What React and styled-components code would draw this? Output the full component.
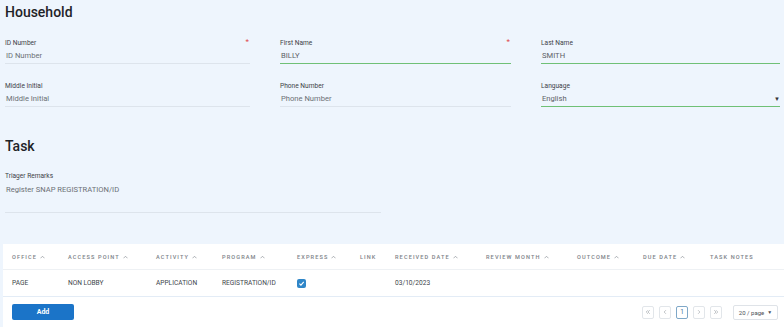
import React from "react";
import styled, { createGlobalStyle } from "styled-components";

const Global = createGlobalStyle`
  html, body { margin: 0; padding: 0; background: #ffffff; }
  body { font-family: Roboto, "Liberation Sans", Arial, sans-serif; }
  * { box-sizing: border-box; }
`;

const Page = styled.div`
  width: 784px;
  background: #eef5fd;
  padding: 0 0 0 3px;
`;

const Section = styled.section`
  padding: 0 4px 0 2px;
`;

const Title = styled.h2`
  margin: 0;
  font-size: 14px;
  line-height: 18px;
  font-weight: 500;
  color: #1f2328;
  padding-top: ${(p) => p.$top || 3}px;
`;

const FieldGrid = styled.div`
  display: grid;
  grid-template-columns: 245px 231px 1fr;
  column-gap: 30px;
  row-gap: 18px;
  margin-top: 18px;
`;

const Field = styled.div`
  position: relative;
  width: ${(p) => p.$width || "auto"};
`;

const Label = styled.div`
  font-size: 6.6px;
  line-height: 9px;
  height: 9px;
  color: #3d4247;
`;

const Value = styled.div`
  font-size: 7.6px;
  line-height: 14px;
  padding-left: 1px;
  height: ${(p) => p.$h || 15}px;
  color: ${(p) => (p.$filled ? "#5d6166" : "#6c7075")};
  display: flex;
  align-items: ${(p) => (p.$tall ? "flex-start" : "center")};
  justify-content: space-between;
  padding-top: ${(p) => (p.$tall ? "2px" : "0")};
`;

const Underline = styled.div`
  height: 1px;
  background: ${(p) => (p.$filled ? "#6fc076" : "#dde4ec")};
`;

const Required = styled.span`
  position: absolute;
  right: 1px;
  top: -2px;
  color: #e0454f;
  font-size: 8px;
`;

const Caret = styled.span`
  font-size: 6px;
  color: #333;
`;

const TaskFields = styled.div`
  margin-top: 17px;
`;

const Table = styled.div`
  margin-top: 31px;
  background: #ffffff;
`;

const cols = "65px 88px 66px 75px 63px 35px 91px 91px 66px 67px 1fr";

const HeadRow = styled.div`
  display: grid;
  grid-template-columns: ${cols};
  height: 26px;
  align-items: center;
  border-bottom: 1px solid #eef1f4;
  padding-top: 1px;
`;

const BodyRow = styled.div`
  display: grid;
  grid-template-columns: ${cols};
  height: 27px;
  align-items: center;
  border-bottom: 1px solid #e3ecf6;
`;

const Th = styled.div`
  font-size: 5.6px;
  letter-spacing: 1.1px;
  color: #7d8288;
  font-weight: 500;
  padding-left: ${(p) => (p.$first ? 9 : 0)}px;
  display: flex;
  align-items: center;
  gap: 3px;
  white-space: nowrap;
`;

const Td = styled.div`
  font-size: 6.6px;
  color: #41464c;
  padding-left: ${(p) => (p.$first ? 9 : 0)}px;
  white-space: nowrap;
  display: flex;
  align-items: center;
`;

const Check = styled.span`
  width: 9px;
  height: 9px;
  border-radius: 2px;
  background: #2f86c8;
  display: inline-flex;
  align-items: center;
  justify-content: center;
`;

const Footer = styled.div`
  display: flex;
  align-items: center;
  justify-content: space-between;
  height: 30px;
  padding: 0 6px 0 9px;
`;

const AddButton = styled.button`
  width: 62px;
  height: 16px;
  border: none;
  border-radius: 2px;
  background: #1b74c8;
  color: #fff;
  font-family: inherit;
  font-size: 7px;
  font-weight: 700;
  padding: 0;
`;

const Pager = styled.div`
  display: flex;
  align-items: center;
  gap: 5px;
`;

const PageBtn = styled.div`
  width: 12px;
  height: 13px;
  border: 1px solid ${(p) => (p.$active ? "#7fa8c8" : "#e2e6ea")};
  border-radius: 2px;
  font-size: 6.5px;
  color: ${(p) => (p.$active ? "#3d6f99" : "#9aa0a6")};
  display: flex;
  align-items: center;
  justify-content: center;
  background: #fff;
`;

const SizeSelect = styled.div`
  margin-left: 6px;
  width: 45px;
  height: 15px;
  border: 1px solid #dfe3e8;
  border-radius: 2px;
  font-size: 6px;
  color: #4b5056;
  display: flex;
  align-items: center;
  justify-content: center;
  gap: 3px;
  background: #fff;
`;

const SmallCaret = styled.span`
  font-size: 5px;
`;

const Up = () => (
  <svg width="5" height="4" viewBox="0 0 10 6" fill="none">
    <path d="M1 5.5 L5 1.5 L9 5.5" stroke="#8b9096" strokeWidth="1.4" />
  </svg>
);

const Chev = ({ d }) => (
  <svg width="6" height="6" viewBox="0 0 10 10" fill="none">
    <path d={d} stroke="#a3a8ad" strokeWidth="1.1" />
  </svg>
);

const headers = [
  ["OFFICE", true],
  ["ACCESS POINT", true],
  ["ACTIVITY", true],
  ["PROGRAM", true],
  ["EXPRESS", true],
  ["LINK", false],
  ["RECEIVED DATE", true],
  ["REVIEW MONTH", true],
  ["OUTCOME", true],
  ["DUE DATE", true],
  ["TASK NOTES", false],
];

const InputField = ({ label, value, filled, required, caret, tall, h, width }) => (
  <Field $width={width}>
    <Label>{label}</Label>
    <Value $filled={filled} $tall={tall} $h={h}>
      {value}
      {caret && <Caret>▼</Caret>}
    </Value>
    <Underline $filled={filled} />
    {required && <Required>*</Required>}
  </Field>
);

export default function App() {
  return (
    <>
      <Global />
      <Page>
        <Section>
          <Title $top={3}>Household</Title>
          <FieldGrid>
            <InputField label="ID Number" value="ID Number" required />
            <InputField label="First Name" value="BILLY" filled required />
            <InputField label="Last Name" value="SMITH" filled />
            <InputField label="Middle Initial" value="Middle Initial" />
            <InputField label="Phone Number" value="Phone Number" />
            <InputField label="Language" value="English" filled caret />
          </FieldGrid>
          <Title $top={30}>Task</Title>
          <TaskFields>
            <InputField
              width="376px"
              label="Triager Remarks"
              value="Register SNAP REGISTRATION/ID"
              tall
              h={31}
            />
          </TaskFields>
        </Section>
        <Table>
          <HeadRow>
            {headers.map(([h, s], i) => (
              <Th key={h} $first={i === 0}>
                {h}
                {s && <Up />}
              </Th>
            ))}
          </HeadRow>
          <BodyRow>
            <Td $first>PAGE</Td>
            <Td>NON LOBBY</Td>
            <Td>APPLICATION</Td>
            <Td>REGISTRATION/ID</Td>
            <Td>
              <Check>
                <svg width="7" height="7" viewBox="0 0 10 10" fill="none">
                  <path d="M2 5.2 L4.2 7.3 L8.2 2.8" stroke="#fff" strokeWidth="1.6" />
                </svg>
              </Check>
            </Td>
            <Td />
            <Td>03/10/2023</Td>
            <Td />
            <Td />
            <Td />
            <Td />
          </BodyRow>
          <Footer>
            <AddButton>Add</AddButton>
            <Pager>
              <PageBtn><Chev d="M5 2 L2 5 L5 8 M8 2 L5 5 L8 8" /></PageBtn>
              <PageBtn><Chev d="M6.5 2 L3.5 5 L6.5 8" /></PageBtn>
              <PageBtn $active>1</PageBtn>
              <PageBtn><Chev d="M3.5 2 L6.5 5 L3.5 8" /></PageBtn>
              <PageBtn><Chev d="M2 2 L5 5 L2 8 M5 2 L8 5 L5 8" /></PageBtn>
              <SizeSelect>20 / page <SmallCaret>▼</SmallCaret></SizeSelect>
            </Pager>
          </Footer>
        </Table>
      </Page>
    </>
  );
}
